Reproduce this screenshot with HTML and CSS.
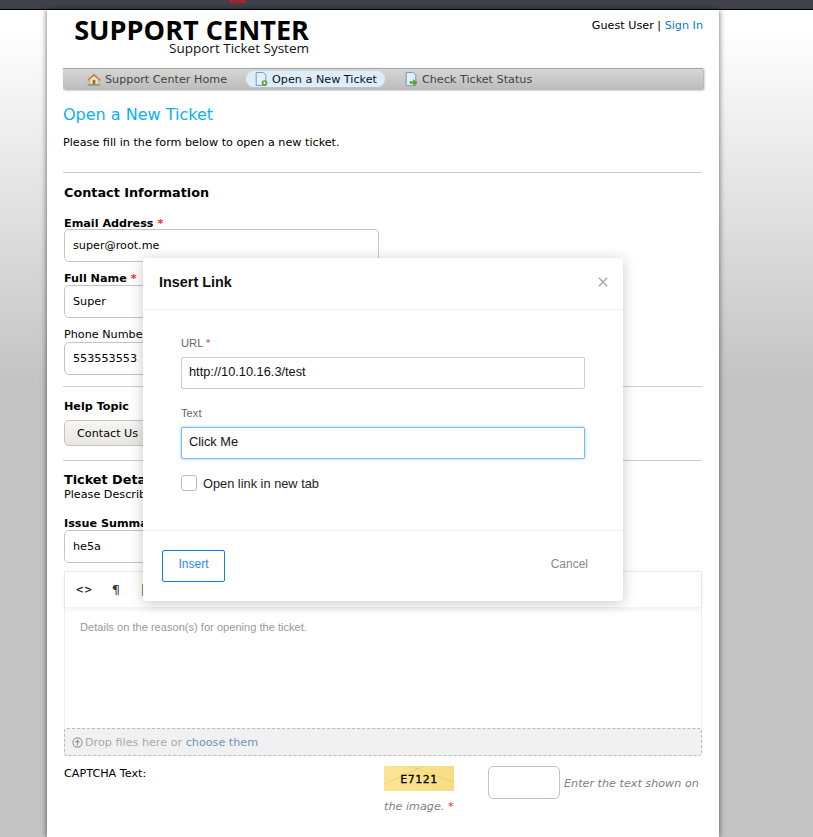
FILE: index.html

```html
<!DOCTYPE html>
<html lang="en">
<head>
    <meta charset="UTF-8">
    <meta name="viewport" content="width=device-width, initial-scale=1.0">
    <title>Support Center - Open a New Ticket</title>
    <link rel="stylesheet" href="styles.css">
</head>
<body>
    <div class="browser-bar"><svg class="bar-mark" width="16" height="3" viewBox="0 0 16 3"><path d="M0 0h16v3H11V1H10v2H6V1H5v2H0z" fill="#b3202c"/></svg></div>
    <div class="page">
        <div class="header">
            <div class="logo">
                <div class="logo-title">SUPPORT CENTER</div>
                <div class="logo-sub">Support Ticket System</div>
            </div>
            <p class="user-info">Guest User | <a href="#">Sign In</a></p>
        </div>
        <ul class="nav">
            <li class="nav-item">
                <svg class="nav-icon" viewBox="0 0 16 16"><path d="M3 8l5-4 5 4v6H3z" fill="#efe3c4" stroke="#a99b78" stroke-width=".6"/><path d="M0 9l8-7 8 7-1.500 1L8 4.500 1.500 10z" fill="#c9803c"/><rect x="6.500" y="9" width="3" height="5" fill="#9c6a3a"/><path d="M1 14h14v1.500H1z" fill="#6fa04a"/></svg>
                Support Center Home
            </li>
            <li class="nav-item nav-active">
                <svg class="nav-icon" viewBox="0 0 16 16"><path d="M2.500 .5h8l3 3v12h-11z" fill="#e4effa" stroke="#5b8fc7"/><circle cx="12" cy="12.500" r="3.200" fill="#5aa52f"/><path d="M10.500 12.500h3M12 11v3" stroke="#fff"/></svg>
                Open a New Ticket
            </li>
            <li class="nav-item">
                <svg class="nav-icon" viewBox="0 0 16 16"><path d="M2.500 .5h8l3 3v12h-11z" fill="#e4effa" stroke="#5b8fc7"/><path d="M6.500 10.500h4V8l5 4-5 4v-2.500h-4z" fill="#5aa52f"/></svg>
                Check Ticket Status
            </li>
        </ul>

        <h1 class="page-title">Open a New Ticket</h1>
        <p class="intro">Please fill in the form below to open a new ticket.</p>
        <hr>

        <h3 class="section-title contact-title">Contact Information</h3>
        <div class="field email-field">
            <label class="label-strong">Email Address <span class="required">*</span></label>
            <div class="text-box">super@root.me</div>
        </div>
        <div class="field">
            <label class="label-strong">Full Name <span class="required">*</span></label>
            <div class="text-box">Super</div>
        </div>
        <div class="field phone-field">
            <label>Phone Number</label>
            <div class="text-box">553553553</div>
        </div>
        <hr class="rule-phone">

        <label class="label-strong help-label">Help Topic</label>
        <div class="select-box">Contact Us</div>
        <hr class="rule-help">

        <h3 class="section-title ticket-title">Ticket Details</h3>
        <p class="ticket-note">Please Describe Your Issue</p>
        <div class="field issue-field">
            <label class="label-strong">Issue Summary <span class="required">*</span></label>
            <div class="text-box">he5a</div>
        </div>

        <div class="editor">
            <div class="editor-toolbar">
                <span class="tool tool-code">&lt;&gt;</span>
                <span class="tool">¶</span>
                <span class="tool tool-bold"></span>
            </div>
            <div class="editor-body">Details on the reason(s) for opening the ticket.</div>
        </div>
        <div class="dropzone">
            <svg class="drop-icon" viewBox="0 0 12 12"><circle cx="6" cy="6" r="5" fill="none" stroke="#999" stroke-width="1.300"/><path d="M6 9.200V4M3.800 6L6 3.600 8.200 6" fill="none" stroke="#999" stroke-width="1.300"/></svg>
            <span>Drop files here or <a href="#">choose them</a></span>
        </div>

        <div class="captcha-row">
            <div class="captcha-label">CAPTCHA Text:</div>
            <div class="captcha-main">
                <div class="captcha-line">
                    <div class="captcha-img">E7121</div>
                    <div class="captcha-input"></div>
                    <em class="captcha-hint">Enter the text shown on</em>
                </div>
                <em class="captcha-hint captcha-hint-end">the image. <span class="required">*</span></em>
            </div>
        </div>

        <div class="modal">
            <div class="modal-head">
                <span class="modal-title">Insert Link</span>
                <svg class="modal-close" viewBox="0 0 12 12"><path d="M1 1l10 10M11 1L1 11" stroke="#aaa" stroke-width="1.800"/></svg>
            </div>
            <div class="modal-body">
                <label class="modal-label">URL <span class="required">*</span></label>
                <div class="modal-input">http://10.10.16.3/test</div>
                <label class="modal-label">Text</label>
                <div class="modal-input modal-input-focus">Click Me</div>
                <div class="modal-check"><span class="check-box"></span>Open link in new tab</div>
            </div>
            <div class="modal-foot">
                <button class="btn-insert">Insert</button>
                <button class="btn-cancel">Cancel</button>
            </div>
        </div>
    </div>
</body>
</html>
```

FILE: styles.css

```css
html, body {
    margin: 0;
    padding: 0;
    height: 837px;
    overflow: hidden;
}

body {
    background: linear-gradient(#fff 30px, #c4c4c4 380px);
    font-family: 'DejaVu Sans', sans-serif;
    font-size: 11.2px;
    color: #000;
}

a {
    color: #0a7cc1;
    text-decoration: none;
}

hr {
    border: none;
    border-top: 1px solid #ccc;
    margin: 0;
    width: 639px;
}

p {
    margin: 0;
}

.browser-bar {
    height: 9px;
    background: #3f424b;
    border-bottom: 1px solid #000;
    position: relative;
}

.bar-mark {
    position: absolute;
    left: 229px;
    top: 0;
}

.page {
    position: relative;
    width: 640px;
    height: 827px;
    margin-left: 47px;
    padding: 0 16px;
    background: #fff;
    box-shadow: 0 0 6px rgba(0, 0, 0, 0.6);
}

.header {
    display: flex;
    justify-content: space-between;
    height: 58px;
}

.logo {
    margin-left: 11px;
    width: 235px;
    text-align: right;
    font-family: 'Open Sans', sans-serif;
}

.logo-title {
    font-size: 27.1px;
    font-weight: 700;
    line-height: 24px;
    margin-top: 8px;
    white-space: nowrap;
    color: #000;
}

.logo-sub {
    font-size: 13.5px;
    line-height: 12px;
    color: #111;
}

.user-info {
    margin-top: 9px;
    line-height: 14px;
}

.nav {
    list-style: none;
    margin: 0;
    padding: 0 0 0 16px;
    height: 20px;
    width: 624px;
    display: flex;
    align-items: center;
    gap: 11px;
    border-top: 1px solid #a5a5a5;
    background: linear-gradient(#d6d6d5, #bdbdbc);
    box-shadow: 1px 1px 2px rgba(0, 0, 0, 0.4);
}

.nav-item {
    display: flex;
    align-items: center;
    gap: 4px;
    height: 16px;
    padding: 0 8px;
    color: #444;
    white-space: nowrap;
}

.nav-active {
    color: #111;
    background: #dcedfb;
    border-radius: 8px;
}

.nav-icon {
    width: 14px;
    height: 14px;
}

.page-title {
    margin: 16px 0 0;
    font-size: 16px;
    font-weight: 400;
    line-height: 20px;
    color: #0cb0f0;
}

.intro {
    margin: 11px 0 22px;
    line-height: 14px;
}

.section-title {
    margin: 0;
    font-size: 12.8px;
    font-weight: 700;
    line-height: 16px;
}

.contact-title {
    margin: 12px 0 0 1px;
}

.field {
    margin: 0 0 0 1px;
}

.field label {
    display: block;
    line-height: 14px;
}

.email-field {
    margin-top: 16px;
}

.email-field .text-box {
    margin-top: -2px;
}

.field + .field {
    margin-top: 10px;
}

.phone-field .text-box {
    margin-top: 0;
}

.label-strong {
    font-weight: 700;
}

.required {
    color: #f22;
}

.text-box {
    box-sizing: border-box;
    width: 315px;
    height: 33px;
    margin-top: -1px;
    padding: 0 8px;
    line-height: 32px;
    border: 1px solid #c8c3bc;
    border-radius: 5px;
    background: #fff;
}

.rule-phone {
    margin-top: 11px;
}

.help-label {
    display: block;
    margin: 13px 0 0 1px;
    line-height: 14px;
}

.select-box {
    box-sizing: border-box;
    width: 120px;
    height: 26px;
    margin: 6px 0 0 1px;
    padding: 0 12px;
    line-height: 26px;
    border: 1px solid #c8c3bc;
    border-radius: 5px;
    background: linear-gradient(#f6f5f3, #e8e6e1);
}

.rule-help {
    margin-top: 14px;
}

.ticket-title {
    margin: 12px 0 0 1px;
    line-height: 14px;
}

.ticket-note {
    margin: 1px 0 0 1px;
    line-height: 14px;
}

.issue-field {
    margin-top: 15px;
}

.editor {
    box-sizing: border-box;
    width: 638px;
    height: 157px;
    margin: 8px 0 0 1px;
    border: 1px solid #eee;
    border-bottom: none;
}

.editor-toolbar {
    display: flex;
    align-items: center;
    height: 35px;
    padding-left: 3px;
    box-shadow: 0 2px 6px rgba(0, 0, 0, 0.08);
}

.tool {
    width: 32px;
    text-align: center;
    color: #333;
    font-size: 13px;
}

.tool-code {
    font-weight: 700;
    font-size: 10px;
}

.tool-bold {
    width: 4px;
    height: 12px;
    margin-left: 10px;
    background: #c8853a;
}

.editor-body {
    padding: 13px 15px 0;
    font-family: 'Liberation Sans', sans-serif;
    font-size: 11.1px;
    line-height: 14px;
    color: #999;
}

.dropzone {
    box-sizing: border-box;
    display: flex;
    align-items: center;
    gap: 2px;
    width: 638px;
    height: 28px;
    margin-left: 1px;
    padding-left: 7px;
    border: 1px dashed #bbb;
    border-radius: 3px;
    background: #f1f1f1;
    color: #aaa;
}

.dropzone a {
    color: #6b93ba;
}

.drop-icon {
    width: 11px;
    height: 11px;
}

.captcha-row {
    display: flex;
    margin: 10px 0 0 1px;
}

.captcha-label {
    width: 320px;
    padding-top: 1px;
    line-height: 14px;
}

.captcha-main {
    flex: 1;
}

.captcha-line {
    display: flex;
    align-items: flex-start;
}

.captcha-img {
    width: 70px;
    height: 25px;
    margin-right: 34px;
    line-height: 27px;
    text-align: center;
    font-size: 11px;
    letter-spacing: 0.5px;
    -webkit-text-stroke: 0.3px #000;
    background:
        linear-gradient(155deg, transparent 30%, rgba(190, 160, 90, 0.25) 32%, transparent 34%),
        linear-gradient(20deg, transparent 66%, rgba(190, 160, 90, 0.25) 68%, transparent 70%),
        linear-gradient(100deg, #fbe596, #f7dc80);
}

.captcha-input {
    box-sizing: border-box;
    width: 72px;
    height: 33px;
    margin-right: 4px;
    border: 1px solid #c8c3bc;
    border-radius: 5px;
}

.captcha-hint {
    color: #808080;
    line-height: 36px;
    white-space: nowrap;
}

.captcha-hint-end {
    display: block;
    margin-top: -3px;
    line-height: 16px;
}

/* dialog sits over the form */
.modal {
    position: absolute;
    left: 96px;
    top: 248px;
    width: 480px;
    height: 343px;
    background: #fff;
    border-radius: 3px;
    box-shadow: 0 2px 14px rgba(0, 0, 0, 0.22);
    font-family: 'Liberation Sans', sans-serif;
    font-size: 12.8px;
    color: #222;
}

.modal .required {
    color: #f4386a;
}

.modal-head {
    box-sizing: border-box;
    display: flex;
    align-items: center;
    justify-content: space-between;
    height: 52px;
    padding: 0 15px 4px 16px;
    border-bottom: 1px solid #eee;
}

.modal-title {
    font-size: 14.4px;
    font-weight: 700;
    color: #111;
}

.modal-close {
    width: 10px;
    height: 10px;
}

.modal-body {
    padding: 26px 38px 0 38px;
}

.modal-label {
    display: block;
    font-size: 11.2px;
    line-height: 14px;
    color: #666;
    margin-bottom: 7px;
}

.modal-input {
    box-sizing: border-box;
    width: 404px;
    height: 32px;
    margin-bottom: 17px;
    padding: 0 7px;
    line-height: 28px;
    border: 1px solid #ccc;
    border-radius: 2px;
    color: #111;
}

.modal-input-focus {
    border-color: #7cbcf5;
    box-shadow: 0 0 3px rgba(90, 170, 250, 0.7);
    margin-bottom: 16px;
}

.modal-check {
    display: flex;
    align-items: center;
    gap: 6px;
    height: 16px;
    color: #222;
}

.check-box {
    box-sizing: border-box;
    width: 16px;
    height: 16px;
    border: 1px solid #bbb;
    border-radius: 3px;
}

.modal-foot {
    display: flex;
    justify-content: space-between;
    align-items: center;
    box-sizing: border-box;
    position: absolute;
    left: 0;
    right: 0;
    top: 272px;
    height: 71px;
    padding: 0 35px 0 19px;
    border-top: 1px solid #eee;
}

.btn-insert {
    width: 63px;
    height: 32px;
    padding: 0 0 5px;
    background: #fff;
    border: 1px solid #0d7ee8;
    border-radius: 2px;
    color: #2b8cf0;
    font-family: 'Liberation Sans', sans-serif;
    font-size: 12px;
}

.btn-cancel {
    padding: 0 0 5px;
    background: none;
    border: none;
    color: #888;
    font-family: 'Liberation Sans', sans-serif;
    font-size: 12px;
}
```
